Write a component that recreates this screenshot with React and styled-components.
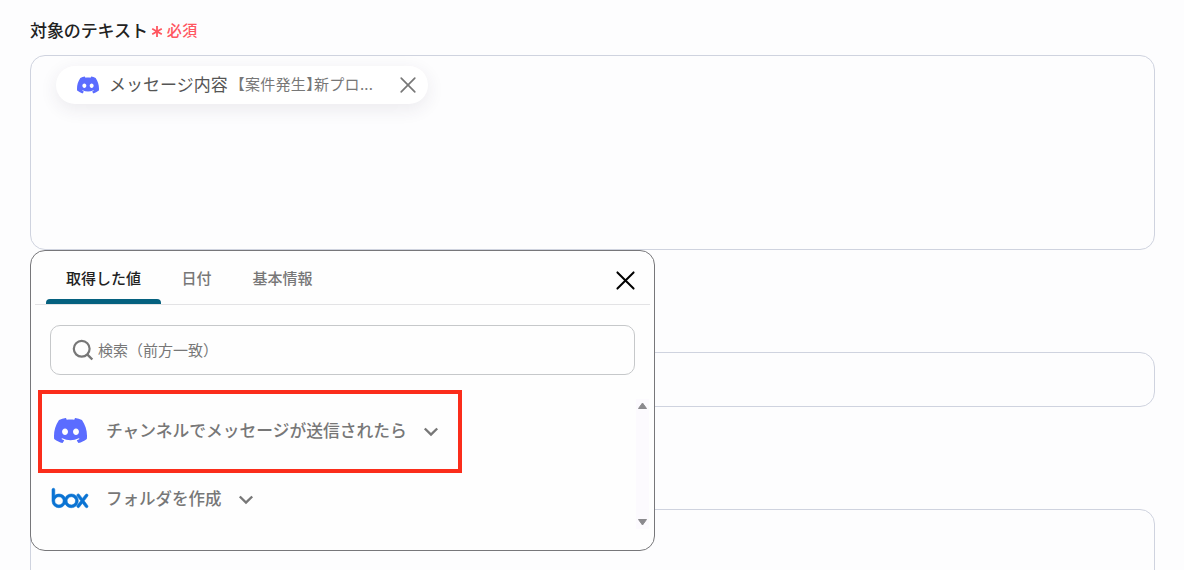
import React from "react";
import styled, { createGlobalStyle } from "styled-components";
import { SiBox, SiDiscord } from "react-icons/si";

const GlobalStyle = createGlobalStyle`
  * {
    box-sizing: border-box;
  }
  body {
    margin: 0;
    background: #fdfdfe;
    font-family: "Noto Sans CJK JP", sans-serif;
    overflow: hidden;
  }
`;

const StyledForm = styled.main`
  position: relative;
  height: 570px;
  padding: 15px 29px 0 30px;
  overflow: hidden;
`;
const StyledLabel = styled.div`
  display: flex;
  align-items: center;
  height: 29px;
  margin-bottom: 11px;
  font-size: 17px;
  font-weight: 500;
  letter-spacing: -0.1px;
  color: #222;
`;
const StyledRequired = styled.span`
  display: flex;
  align-items: center;
  margin-left: 3px;
  gap: 4px;
  font-size: 15px;
  letter-spacing: 0.4px;
  color: #ff5660;
  > svg {
    margin-top: 4px;
  }
`;
const StyledField = styled.section`
  height: ${(props) => props.$height}px;
  margin-bottom: 102px;
  padding: 10px 25px;
  border: 1px solid #cfd3df;
  border-radius: 15px;
`;
const StyledChip = styled.div`
  display: flex;
  align-items: center;
  width: 372px;
  height: 38px;
  padding: 0 12px 0 21px;
  border-radius: 19px;
  background: #fff;
  box-shadow: 0 5px 18px rgba(60, 40, 80, 0.09);
  color: #555;
  font-size: 17px;
  white-space: nowrap;
  > .title {
    margin: 0 0 3px 10px;
  }
  > .value {
    margin: 0 0 3px 2px;
    color: #777;
    font-size: 15px;
    letter-spacing: 0.3px;
  }
  .bracket {
    font-feature-settings: "halt";
  }
  > .close {
    margin-left: auto;
  }
`;
const StyledPanel = styled.section`
  position: absolute;
  left: 30px;
  top: 250px;
  width: 625px;
  height: 301px;
  border: 1px solid #77777a;
  border-radius: 15px;
  background: #fefefe;
`;
const StyledTabs = styled.nav`
  display: flex;
  align-items: flex-start;
  height: 54px;
  margin: 0 4px;
  padding: 0 15px 0 11px;
  border-bottom: 1px solid #e3e3e5;
`;
const StyledTab = styled.div`
  position: relative;
  width: ${(props) => props.$width}px;
  height: 53px;
  padding-top: 3px;
  color: ${(props) => (props.$active ? "#222" : "#777")};
  font-size: 15px;
  font-weight: 500;
  line-height: 47px;
  text-align: center;
  &::after {
    content: "";
    position: absolute;
    left: 0;
    right: 0;
    bottom: 0;
    height: 5px;
    border-radius: 4px 4px 0 0;
    background: ${(props) => (props.$active ? "#05617f" : "transparent")};
  }
`;
const StyledTabList = styled.div`
  display: flex;
  flex: 1;
`;
const StyledClose = styled.div`
  display: flex;
  padding-top: 20px;
`;
const StyledSearch = styled.div`
  display: flex;
  align-items: center;
  gap: 4px;
  height: 50px;
  margin: 20px 19px 0;
  padding: 0 21px;
  border: 1px solid #c6c8ca;
  border-radius: 10px;
  color: #777;
  font-size: 15px;
  > .placeholder {
    margin-bottom: 2px;
  }
`;
const StyledList = styled.div`
  display: flex;
  justify-content: space-between;
  height: 137px;
  margin-top: 20px;
  padding: 0 5px 0 20px;
`;
const StyledRow = styled.div`
  display: flex;
  align-items: center;
  height: 68px;
  color: #777;
  font-size: ${(props) => props.$fontSize}px;
  font-weight: 500;
  > .logo {
    display: flex;
    justify-content: center;
    width: 38px;
    margin-right: 17px;
  }
  > .arrow {
    margin: 3px 0 0 16px;
  }
`;
const StyledRows = styled.div`
  padding-top: 1px;
`;
const StyledScrollbar = styled.div`
  display: flex;
  flex-direction: column;
  align-items: center;
  justify-content: space-between;
  width: 13px;
  height: 130px;
  margin-top: 4px;
  padding: 2px 0;
  background: #fcfafe;
`;
const StyledHighlight = styled.div`
  position: absolute;
  left: 37.5px;
  top: 389.5px;
  width: 424px;
  height: 83px;
  border: 4px solid #fb2d1b;
`;

const Cross = ({ size, color, weight }) => (
  <svg className="close" width={size} height={size} viewBox="0 0 20 20">
    <path
      d="M1.5 1.5 L18.5 18.5 M18.5 1.5 L1.5 18.5"
      stroke={color}
      strokeWidth={weight}
      strokeLinecap="round"
    />
  </svg>
);

const Asterisk = () => (
  <svg width="12" height="13" viewBox="0 0 12 13">
    <path
      d="M6 1 V12 M1.2 3.8 L10.8 9.2 M10.8 3.8 L1.2 9.2"
      stroke="#ff5660"
      strokeWidth="1.8"
    />
  </svg>
);

const Chevron = () => (
  <svg className="arrow" width="16" height="10" viewBox="0 0 16 10" fill="none">
    <path d="M1.8 1.5 L8 7.6 L14.2 1.5" stroke="#777" strokeWidth="2.4" />
  </svg>
);

const ScrollArrow = ({ down }) => (
  <svg width="11" height="9" viewBox="0 0 11 9">
    <path
      d={down ? "M1.5 1.5 H9.5 L5.5 7 Z" : "M1.5 7.5 H9.5 L5.5 2 Z"}
      fill="#8b8a8e"
      stroke="#8b8a8e"
      strokeLinejoin="round"
    />
  </svg>
);

const TABS = [
  { title: "取得した値", width: 115, active: true },
  { title: "日付", width: 71 },
  { title: "基本情報", width: 101 },
];

const ROWS = [
  {
    title: "チャンネルでメッセージが送信されたら",
    fontSize: 16.75,
    logo: <SiDiscord size={33} color="#5b6cff" />,
  },
  {
    title: "フォルダを作成",
    fontSize: 16.5,
    logo: <SiBox size={36} color="#0a73d3" stroke="#0a73d3" strokeWidth={0.4} overflow="visible" />,
  },
];

const App = () => {
  return (
    <StyledForm>
      <GlobalStyle />
      <StyledLabel>
        対象のテキスト
        <StyledRequired>
          <Asterisk />
          必須
        </StyledRequired>
      </StyledLabel>
      <StyledField $height={195}>
        <StyledChip>
          <SiDiscord size={22} color="#5b6cff" />
          <span className="title">メッセージ内容</span>
          <span className="value">
            【案件発生<span className="bracket">】</span>新プロ...
          </span>
          <Cross size={16} color="#777" weight={2.1} />
        </StyledChip>
      </StyledField>
      <StyledField $height={55} />
      <StyledField $height={100} />
      <StyledPanel>
        <StyledTabs>
          <StyledTabList>
            {TABS.map((tab) => (
              <StyledTab key={tab.title} $width={tab.width} $active={tab.active}>
                {tab.title}
              </StyledTab>
            ))}
          </StyledTabList>
          <StyledClose>
            <Cross size={19} color="#000" weight={2.1} />
          </StyledClose>
        </StyledTabs>
        <StyledSearch>
          <svg width="22" height="22" viewBox="0 0 22 22" fill="none">
            <circle cx="9.7" cy="9.8" r="7.9" stroke="#777" strokeWidth="2.2" />
            <path d="M15.2 15.4 L20.3 20.5" stroke="#777" strokeWidth="2.4" />
          </svg>
          <span className="placeholder">検索（前方一致）</span>
        </StyledSearch>
        <StyledList>
          <StyledRows>
            {ROWS.map((row) => (
              <StyledRow key={row.title} $fontSize={row.fontSize}>
                <span className="logo">{row.logo}</span>
                {row.title}
                <Chevron />
              </StyledRow>
            ))}
          </StyledRows>
          <StyledScrollbar>
            <ScrollArrow />
            <ScrollArrow down />
          </StyledScrollbar>
        </StyledList>
      </StyledPanel>
      <StyledHighlight />
    </StyledForm>
  );
};

export default App;
